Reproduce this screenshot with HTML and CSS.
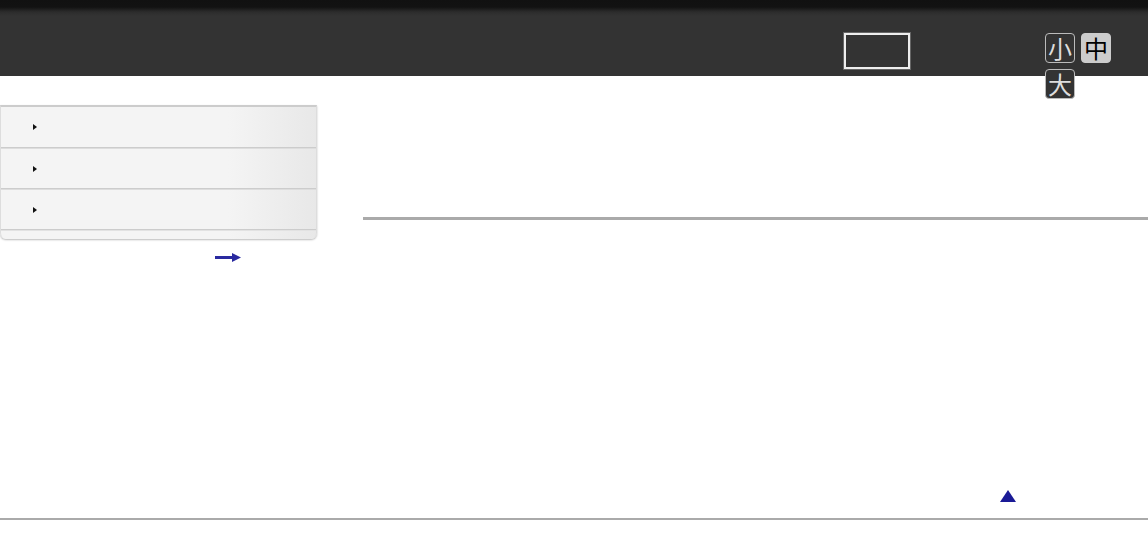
FILE: index.html
```html
<!DOCTYPE html>
<html lang="ja">
<head>
    <meta charset="UTF-8">
    <meta name="viewport" content="width=device-width, initial-scale=1.0">
    <title>ヘルプガイド</title>
    <link rel="stylesheet" href="styles.css">
</head>
<body>
    <div class="header">
        <div class="search-box"></div>
        <div class="font-size">
            <span class="size-btn">小</span>
            <span class="size-btn active">中</span>
            <span class="size-btn">大</span>
        </div>
    </div>

    <div class="main">
        <div class="sidebar">
            <div class="menu">
                <div class="menu-item"><span class="marker"></span></div>
                <div class="menu-item"><span class="marker"></span></div>
                <div class="menu-item"><span class="marker"></span></div>
                <div class="menu-foot"></div>
            </div>
            <div class="more">
                <svg width="26" height="9" viewBox="0 0 26 9">
                    <rect x="0" y="3" width="18" height="3" fill="#2a2aa0"/>
                    <polygon points="17,0 26,4.5 17,9" fill="#2a2aa0"/>
                </svg>
            </div>
        </div>
        <div class="content">
            <div class="rule"></div>
        </div>
    </div>

    <div class="page-top">
        <svg width="16" height="12" viewBox="0 0 16 12">
            <polygon points="8,0 16,12 0,12" fill="#1a1a96"/>
        </svg>
    </div>
    <div class="footer"></div>
</body>
</html>
```

FILE: styles.css
```css
body {
    margin: 0;
    font-family: "Noto Sans CJK JP", "Liberation Sans", sans-serif;
    background: #fff;
}

.header {
    height: 76px;
    box-sizing: border-box;
    background: linear-gradient(#111 0, #121212 7px, #2c2c2c 12px, #333 16px, #333 100%);
    display: flex;
    align-items: flex-start;
    padding-top: 33px;
    padding-right: 37px;
}

.search-box {
    margin-left: auto;
    width: 62px;
    height: 32px;
    border: 2px solid #eee;
    box-shadow: 0 0 0 1px #666;
}

.font-size {
    margin-left: 135px;
    width: 66px;
    display: flex;
    flex-wrap: wrap;
    gap: 6px;
}

.size-btn {
    width: 28px;
    height: 28px;
    border: 1px solid #bbb;
    border-radius: 4px;
    background: #333;
    color: #ddd;
    font-size: 24px;
    line-height: 28px;
    text-align: center;
}

.size-btn.active {
    background: #ccc;
    color: #000;
    border-color: #ccc;
}

.main {
    display: flex;
    align-items: flex-start;
}

.sidebar {
    width: 317px;
    margin-top: 29px;
}

.menu {
    border-top: 2px solid #ccc;
    border-left: 1px solid #ddd;
    border-right: 1px solid #ddd;
    border-radius: 0 0 6px 6px;
    box-shadow: 0 1px 2px #bbb;
    background: linear-gradient(to right, #f4f4f4 0, #f4f4f4 72%, #e8e8e8 100%);
}

.menu-item {
    height: 40px;
    border-bottom: 1px solid #ccc;
    display: flex;
    align-items: center;
    padding-left: 32px;
}

.menu-item + .menu-item {
    border-top: 1px solid #ddd;
    height: 39px;
}

.marker {
    width: 0;
    height: 0;
    border-top: 3.5px solid transparent;
    border-bottom: 3.5px solid transparent;
    border-left: 4px solid #111;
}

.menu-foot {
    height: 8px;
    border-top: 1px solid #e2e2e2;
}

.more {
    padding-left: 215px;
    margin-top: 14px;
    height: 9px;
}

.more svg {
    display: block;
}

.content {
    flex: 1;
    margin-left: 46px;
    padding-top: 141px;
}

.rule {
    height: 3px;
    background: #aaa;
}

.page-top {
    margin-top: 228px;
    padding-left: 1000px;
    height: 12px;
}

.page-top svg {
    display: block;
}

.footer {
    margin-top: 16px;
    height: 2px;
    background: #aaa;
}
```
